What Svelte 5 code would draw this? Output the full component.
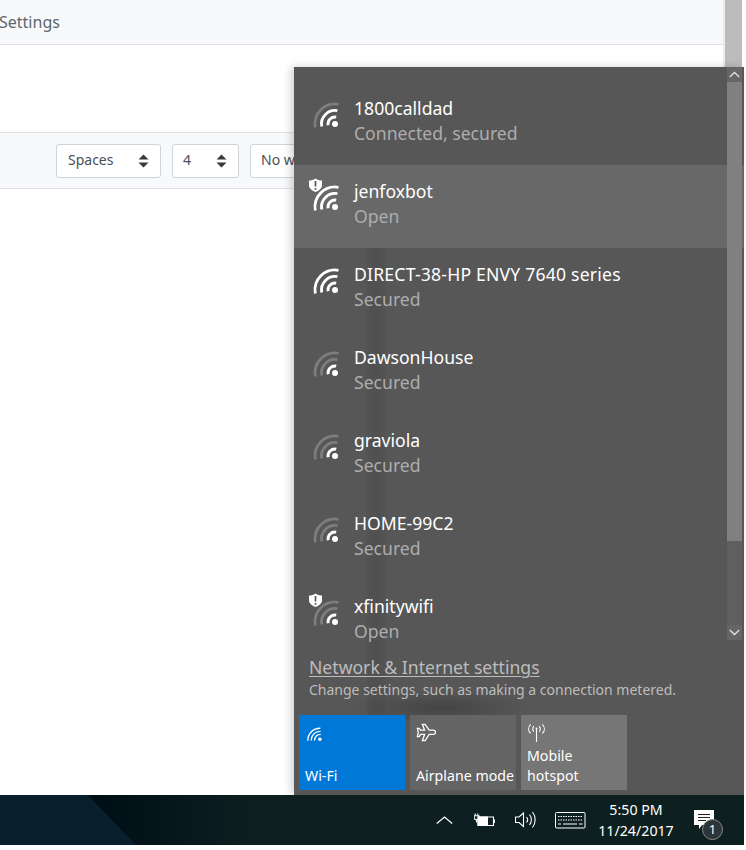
<script>
  const networks = [
    { name: '1800calldad', sub: 'Connected, secured', dim: 1 },
    { name: 'jenfoxbot', sub: 'Open', shield: true, hover: true, dim: 0 },
    { name: 'DIRECT-38-HP ENVY 7640 series', sub: 'Secured', dim: 0, wide: true },
    { name: 'DawsonHouse', sub: 'Secured', dim: 2 },
    { name: 'graviola', sub: 'Secured', dim: 2 },
    { name: 'HOME-99C2', sub: 'Secured', dim: 2 },
    { name: 'xfinitywifi', sub: 'Open', shield: true, dim: 2 }
  ];
</script>

<div class="page">
  <header class="topbar"><span class="settings">Settings</span></header>
  <div class="toolbar">
    <div class="select sp"><span>Spaces</span><svg width="11" height="14" viewBox="0 0 11 14"><path d="M5.5 0.5 10.5 5.5H.5ZM5.5 13.5 .5 8.5H10.5Z" fill="#343a40"/></svg></div>
    <div class="select four"><span>4</span><svg width="11" height="14" viewBox="0 0 11 14"><path d="M5.5 0.5 10.5 5.5H.5ZM5.5 13.5 .5 8.5H10.5Z" fill="#343a40"/></svg></div>
    <div class="select wrap"><span>No wrap</span></div>
  </div>
  <div class="page-scroll"></div>

  <aside class="flyout">
    <div class="list">
      {#each networks as n}
        <div class="row" class:hover={n.hover}>
          <svg class="wifi" width="28" height="30" viewBox="0 0 28 30" fill="none" stroke-width="2.8">
            <path d="M3.3 27.5A20 20 0 0 1 26.5 4.3" stroke={n.dim >= 1 ? '#7d7d7d' : '#fff'} />
            <path d="M9.7 26.4A13.5 13.5 0 0 1 25.4 10.7" stroke={n.dim >= 2 ? '#7d7d7d' : '#fff'} />
            <path d="M16.1 25.2A7 7 0 0 1 24.2 17.1" stroke="#fff" />
            <circle cx="23" cy="24" r="3" fill="#fff" />
            {#if n.shield}
              <path d="M3.5-4.5C1.5-3 -.5-2.5-3-2.5V2.5C-3 5.5 .5 8 3.5 9 6.5 8 10 5.5 10 2.500V-2.500C7.500-2.500 5.500-3 3.500-4.500Z" fill="#fff" />
              <path d="M3.500-2V3.500M3.500 5V6.800" stroke="#555" stroke-width="1.700" />
            {/if}
          </svg>
          <div class="text">
            <div class="name" class:wide={n.wide}>{n.name}</div>
            <div class="sub">{n.sub}</div>
          </div>
        </div>
      {/each}
      <div class="sb">
        <div class="sb-btn"><svg width="11" height="7" viewBox="0 0 11 7" fill="none" stroke="#e4e4e4" stroke-width="1.300"><path d="M.8 6 5.500 1.500 10.200 6" /></svg></div>
        <div class="sb-thumb"></div>
        <div class="sb-btn"><svg width="11" height="7" viewBox="0 0 11 7" fill="none" stroke="#e4e4e4" stroke-width="1.300"><path d="M.8 1 5.500 5.500 10.200 1" /></svg></div>
      </div>
    </div>

    <div class="foot">
      <div class="link">Network &amp; Internet settings</div>
      <div class="hint">Change settings, such as making a connection metered.</div>
      <div class="tiles">
        <div class="tile blue">
          <svg width="16" height="16" viewBox="0 0 18 18" fill="none" stroke="#fff" stroke-width="1.500">
            <path d="M1 16.500A13.500 13.500 0 0 1 15 2.500" />
            <path d="M4.800 16.300A10 10 0 0 1 15.200 6" />
            <path d="M8.500 16.200A6.500 6.500 0 0 1 15.400 9.500" />
            <circle cx="14.500" cy="15" r="2" fill="#fff" stroke="none" />
          </svg>
          <span class="lbl">Wi-Fi</span>
        </div>
        <div class="tile plane">
          <svg width="20" height="19" viewBox="0 0 22 20" fill="none" stroke="#fff" stroke-width="1.400">
            <path d="M7 1H10L14.500 7.500H19C21 7.500 21.500 9 21.500 10S21 12 19 12H14.500L10 19H7L9.500 12H5L3.500 14.500H1.500L2.500 9.800 1.500 5.500H3.500L5 7.500H9.500Z" />
          </svg>
          <span class="lbl">Airplane mode</span>
        </div>
        <div class="tile hot">
          <svg width="19" height="18" viewBox="0 0 20 20" fill="none" stroke="#fff" stroke-width="1.200">
            <path d="M10 5.500V20" />
            <circle cx="10" cy="5" r="1" fill="#fff" stroke="none" />
            <path d="M7 2.500C5.500 4 5.500 7 7 8.500M13 2.500C14.500 4 14.500 7 13 8.500M3.500 .5C.5 3.500 .5 7.500 3.500 10.500M16.500 .5C19.500 3.500 19.500 7.500 16.500 10.500" />
          </svg>
          <span class="lbl">Mobile<br />hotspot</span>
        </div>
      </div>
    </div>
  </aside>

  <footer class="taskbar">
    <div class="facet"></div>
    <svg class="tray chev" width="17" height="8" viewBox="0 0 17 8" fill="none" stroke="#fff" stroke-width="1.200"><path d="M.8 7.500 8.500 1 16.200 7.500" /></svg>
    <svg class="tray batt" width="21" height="14" viewBox="0 0 21 14" fill="none" stroke="#fff" stroke-width="1.100">
      <path d="M4 4H19.500V12.500H4Z" /><path d="M3.500 3.500H14V13H3.500Z" fill="#fff" stroke="none" />
      <path d="M20.500 6.500V10M1.200 .5V2.500M3.800 .5V2.500" />
      <path d="M.2 2.800H5V5C5 6 3.500 6.800 2.500 6.800S.2 6 .2 5ZM2.500 6.800V9.500" />
    </svg>
    <svg class="tray vol" width="21" height="18" viewBox="0 0 21 18" fill="none" stroke="#fff" stroke-width="1.100">
      <path d="M.5 6H4L8.500 2V15.500L4 11.500H.5Z" />
      <path d="M11.500 6C12.800 7.500 12.800 10 11.500 11.500M14.500 3.500C17 6.500 17 11 14.500 14M17.500 1C21 5.500 21 12 17.500 16.500" />
    </svg>
    <svg class="tray kbd" width="31" height="17" viewBox="0 0 31 17" fill="none" stroke="#fff" stroke-width="1">
      <rect x=".5" y=".5" width="29.500" height="15.500" rx="1" />
      <path d="M3 4.500H27.500M3 8H27.500" stroke-dasharray="1.500 1" />
      <path d="M3 12H6M8 12H22M24 12H27.500" />
    </svg>
    <div class="clock"><div>5:50 PM</div><div>11/24/2017</div></div>
    <div class="notif">
      <svg width="20" height="19" viewBox="0 0 20 19"><path d="M0 0H20V15H8L5 19V15H0Z" fill="#fff" /><path d="M4 4.500H16M4 7.500H16M4 10.500H12" stroke="#222" stroke-width="1" /></svg>
      <span class="badge">1</span>
    </div>
  </footer>
</div>

<style>
  :global(body) { margin: 0; background: #fff; }
  .page {
    position: relative;
    width: 746px;
    height: 850px;
    overflow: hidden;
    background: #fff;
    font-family: "Noto Sans", "Liberation Sans", sans-serif;
    display: flex;
    flex-direction: column;
  }
  .topbar {
    height: 44px;
    width: 724px;
    background: #f8f9fa;
    border-bottom: 1px solid #dee2e6;
    display: flex;
    align-items: center;
    flex: none;
  }
  .settings { margin-left: -1px; font-size: 16px; color: #5c6670; }
  .toolbar {
    margin-top: 87px;
    width: 724px;
    flex: none;
    background: #f8f9fa;
    border-top: 1px solid #dee2e6;
    border-bottom: 1px solid #dee2e6;
    box-sizing: border-box;
    height: 57px;
    display: flex;
    align-items: center;
    gap: 11px;
    padding-left: 56px;
  }
  .select {
    height: 34px;
    box-sizing: border-box;
    background: #fff;
    border: 1px solid #ced4da;
    border-radius: 3px;
    display: flex;
    align-items: center;
    justify-content: space-between;
    padding: 0 11px;
    font-size: 14px;
    color: #495057;
  }
  .select span { margin-top: -2px; }
  .sp { width: 105px; }
  .four { width: 67px; padding-left: 10px; }
  .wrap { width: 130px; padding-left: 10px; }
  .page-scroll {
    position: absolute;
    left: 723px;
    top: 0;
    width: 19px;
    height: 68px;
    background: linear-gradient(90deg, #ececec 0, #ececec 2px, #bcbcbc 2px);
  }
  .flyout {
    position: absolute;
    left: 294px;
    top: 67px;
    width: 450px;
    height: 728px;
    background:
      radial-gradient(ellipse 90px 18px at 148px 641px, rgba(0,0,0,.22), transparent),
      #575757;
    box-shadow: -3px 0 8px rgba(0,0,0,.18);
    color: #fff;
    display: flex;
    flex-direction: column;
  }
  .flyout::before {
    content: "";
    position: absolute;
    left: 70px;
    top: 170px;
    width: 24px;
    height: 480px;
    background: linear-gradient(90deg, transparent, rgba(0,0,0,.07) 30%, rgba(0,0,0,.07) 70%, transparent);
  }
  .list {
    position: relative;
    height: 573px;
    padding-top: 15px;
    box-sizing: border-box;
    flex: none;
  }
  .row {
    position: relative;
    height: 83px;
    box-sizing: border-box;
    padding: 14px 0 0 18px;
    display: flex;
    gap: 14px;
  }
  .row:last-of-type { height: 68px; }
  .row.hover { background: #686868; }
  .wifi { margin-top: 4px; flex: none; overflow: visible; }
  .name { font-size: 17.6px; line-height: 25px; color: #fff; }
  .name.wide { letter-spacing: .2px; }
  .sub { font-size: 17.6px; line-height: 25px; color: #adadad; }
  .sb {
    position: absolute;
    left: 433px;
    top: 0;
    width: 15px;
    height: 573px;
    background: #5f5f5f;
    display: flex;
    flex-direction: column;
  }
  .sb-btn {
    height: 15px;
    flex: none;
    background: #666;
    display: flex;
    align-items: center;
    justify-content: center;
  }
  .sb-thumb { height: 459px; background: #808080; flex: none; margin-bottom: 84px; }
  .foot { position: relative; padding: 0 0 0 5px; display: flex; flex-direction: column; }
  .link {
    margin: 15px 0 0 10px;
    font-size: 17.6px;
    line-height: 24px;
    color: #bdbdbd;
    text-decoration: underline;
    text-underline-offset: 2px;
    text-decoration-thickness: 1px;
  }
  .hint { margin: 0 0 0 10px; font-size: 14px; line-height: 21px; color: #bdbdbd; }
  .tiles { display: flex; gap: 5px; margin-top: 15px; }
  .tile {
    position: relative;
    width: 106px;
    height: 75px;
    box-sizing: border-box;
    padding: 8px 6px 4px;
    display: flex;
    flex-direction: column;
    justify-content: space-between;
    align-items: flex-start;
  }
  .blue { background: #0078d7; }
  .blue svg { margin: 3px 0 0 2px; }
  .plane { background: #646464; }
  .hot { background: #767676; }
  .hot svg { margin-top: 1px; }
  .lbl { font-size: 14.2px; line-height: 20px; white-space: nowrap; color: #fff; }
  .taskbar {
    position: relative;
    margin-top: auto;
    margin-bottom: 5px;
    width: 744px;
    height: 50px;
    flex: none;
    background: linear-gradient(90deg, #000f16 100px, #0e1f21 260px, #0e1f20);
    display: flex;
    align-items: center;
    color: #fff;
  }
  .facet {
    position: absolute;
    left: 0;
    top: 0;
    width: 136px;
    height: 50px;
    background: #0a1f2c;
    clip-path: polygon(0 0, 88px 0, 136px 50px, 0 50px);
  }
  .tray { flex: none; position: relative; }
  .chev { margin-left: 436px; }
  .batt { margin-left: 21px; }
  .vol { margin-left: 20px; }
  .kbd { margin-left: 19px; }
  .clock {
    width: 100px;
    margin-left: 0;
    text-align: center;
    font-size: 14.2px;
    line-height: 21px;
    color: #fff;
    flex: none;
  }
  .notif { position: relative; margin-left: 8px; flex: none; width: 20px; height: 19px; margin-top: -2px; }
  .notif svg { display: block; }
  .badge {
    position: absolute;
    left: 8px;
    top: 9px;
    width: 21px;
    height: 21px;
    box-sizing: border-box;
    border-radius: 50%;
    background: #2c3638;
    border: 1px solid #8a8a8a;
    font-size: 13px;
    line-height: 19px;
    text-align: center;
    color: #fff;
  }
</style>
